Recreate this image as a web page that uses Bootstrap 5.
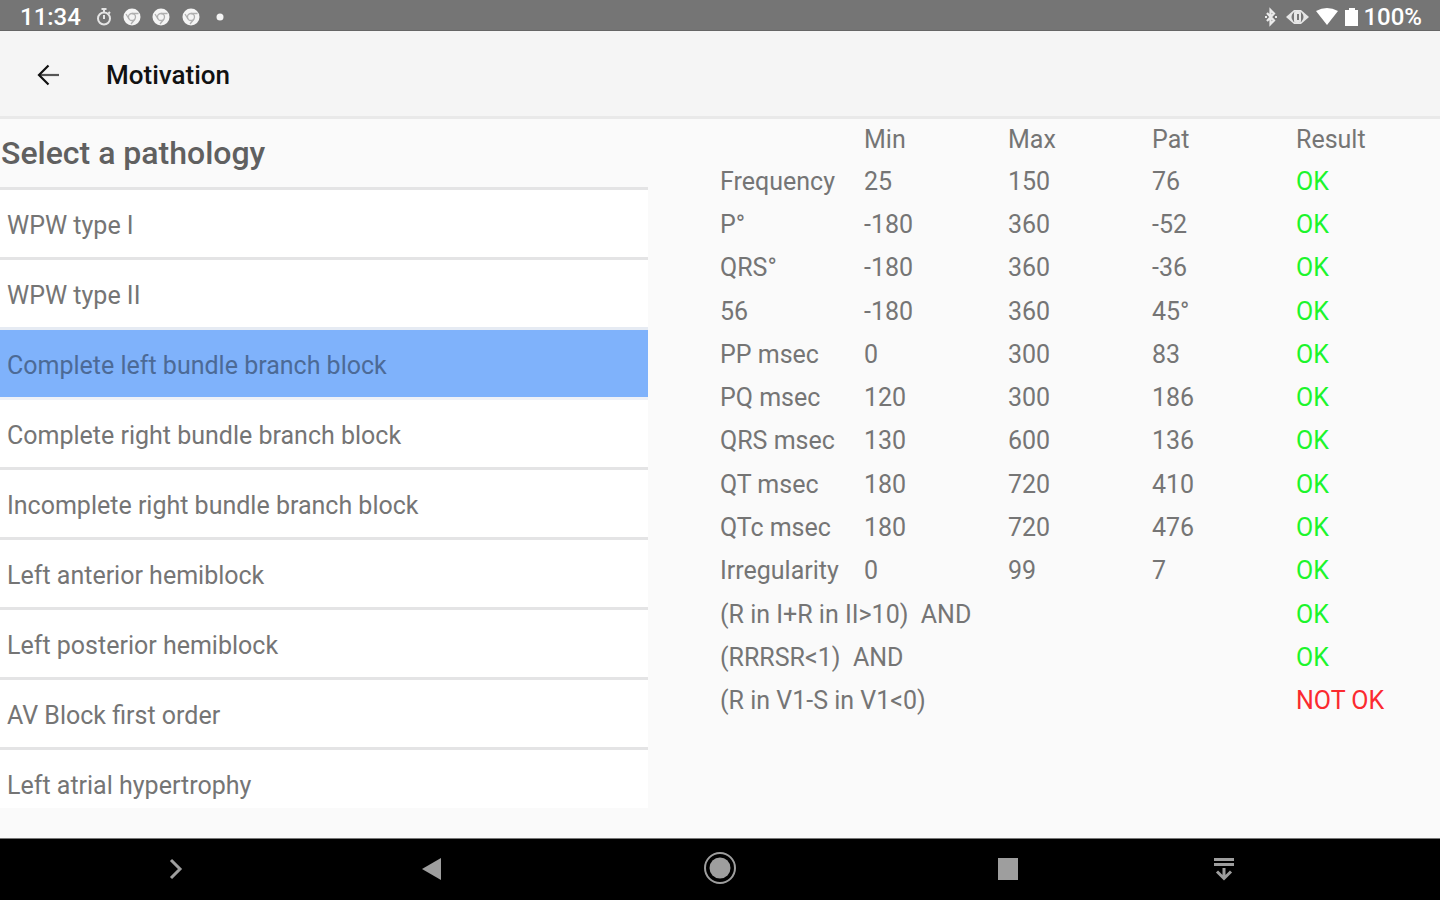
<!DOCTYPE html>
<html lang="en">
<head>
<meta charset="utf-8">
<meta name="viewport" content="width=device-width, initial-scale=1">
<title>Motivation</title>
<link href="https://cdn.jsdelivr.net/npm/bootstrap@5.3.0/dist/css/bootstrap.min.css" rel="stylesheet">
<style>
  body { font-family: Roboto, "Liberation Sans", sans-serif; font-size: 25px; line-height: 32px; color: #757575; background: #fafafa; }
  .status-bar { height: 31px; padding: 3px 18px 0 20px; background: #757575; color: #fff; font-size: 24px; line-height: 30px; font-weight: 500; border-bottom: 1px solid #666; }
  .app-bar { height: 88px; padding: 2px 36px 0; background: #f5f5f5; border-bottom: 3px solid #e9e9e9; color: #111; }
  .app-title { font-size: 26px; line-height: 32px; font-weight: 500; margin-left: 46px; }
  .icon-btn { padding: 0; border: 0; background: none; line-height: 0; color: inherit; }
  .list-pane { width: 45%; padding-bottom: 30px; }
  .list-title { font-size: 32px; line-height: 40px; font-weight: 500; color: #606060; padding: 14px 0 14px 1px; }
  .pathologies .list-group-item { height: 70px; flex-shrink: 0; padding: 4px 7px 0; border: 0; border-top: 3px solid #e4e4e5; color: #757575; background: #fff; background-clip: padding-box; }
  .pathologies .list-group-item + .list-group-item.active { margin-top: 0; border-top-width: 3px; background: #7fb2fb; background-clip: padding-box; color: #4c6a96; border-top-color: #e6ebf3; }
  .pathologies .list-group-item.active + .list-group-item { border-top-color: #eef1f7; }
  .result-pane { width: 50%; }
  .results { table-layout: fixed; height: 604px; }
  .results thead tr { height: 41px; }
  .results th, .results td { padding: 0; font-weight: 400; vertical-align: middle; white-space: pre; }
  .is-ok { color: #1cf52c; }
  .is-bad { color: #fb2a2f; }
  .nav-keys { height: 62px; padding-bottom: 4px; background: #000; color: #9e9e9e; border-top: 1px solid #777; }
  .nav-keys .key { width: 20%; }
  .nav-keys .key-side { width: 15%; margin-left: 5%; }
  .nav-keys .key-end { width: 10%; }
</style>
</head>
<body>
<div class="d-flex flex-column vh-100 overflow-hidden">
  <header class="status-bar d-flex align-items-center flex-shrink-0">
    <span>11:34</span>
    <svg class="ms-3" width="16" height="20" viewBox="0 0 16 20" fill="none" stroke="#e4e4e4" stroke-width="2"><circle cx="7" cy="11.500" r="6"/><path d="M4.500 2h5M7 2v3M11.500 5l1.500 1.500M7 8v4"/></svg>
    <svg class="me-1" width="114" height="20" viewBox="0 0 114 20">
      <g fill="#f4f4f4"><circle cx="19" cy="10" r="8.500"/><circle cx="48" cy="10" r="8.500"/><circle cx="78" cy="10" r="8.500"/><circle cx="107" cy="10" r="3.500"/></g>
      <g fill="none" stroke="#b0b0b0" stroke-width="1.300"><circle cx="19" cy="10" r="3.500"/><path d="M19 6.500h6.500M16 12l-3-5M22 12l-4 5"/><circle cx="48" cy="10" r="3.500"/><path d="M48 6.500h6.500M45 12l-3-5M51 12l-4 5"/><circle cx="78" cy="10" r="3.500"/><path d="M78 6.500h6.500M75 12l-3-5M81 12l-4 5"/></g>
    </svg>
    <svg class="ms-auto me-1" width="96" height="20" viewBox="0 0 96 20" fill="#fff">
      <path d="M4 6l7 7.500L7.500 17V3L11 6.500 4 14M2 10h2m8 0h2" fill="none" stroke="#eaeaea" stroke-width="2.200"/>
      <path d="M23 10l8-7h7l8 7-8 7h-7z" fill="#e6e6e6"/><circle cx="34.500" cy="10" r="6" fill="#777"/><rect x="31" y="4" width="7" height="12" rx="2" fill="#e6e6e6"/><path d="M34 7h2v6h-2z" fill="#777"/>
      <path d="M53 4q11-6 22 0L64 18z"/><path d="M84 3h2V1h6v2h3v16H82V3z"/>
    </svg>
    <span>100%</span>
  </header>

  <nav class="app-bar d-flex align-items-center flex-shrink-0" aria-label="Page">
    <button type="button" class="icon-btn" aria-label="Back">
      <svg width="24" height="24" viewBox="0 0 24 24" fill="none" stroke="currentColor" stroke-width="2.200"><path d="M23 12H4" stroke="#555"/><path d="M12.500 2.500L3 12l9.500 9.500"/></svg>
    </button>
    <h1 class="app-title mb-0">Motivation</h1>
  </nav>

  <main class="d-flex flex-grow-1 justify-content-between overflow-hidden">
    <section class="list-pane d-flex flex-column">
      <h2 class="list-title mb-0">Select a pathology</h2>
      <div class="pathologies list-group list-group-flush overflow-hidden flex-grow-1">
        <button type="button" class="list-group-item list-group-item-action">WPW type I</button>
        <button type="button" class="list-group-item list-group-item-action">WPW type II</button>
        <button type="button" class="list-group-item list-group-item-action active" aria-current="true">Complete left bundle branch block</button>
        <button type="button" class="list-group-item list-group-item-action">Complete right bundle branch block</button>
        <button type="button" class="list-group-item list-group-item-action">Incomplete right bundle branch block</button>
        <button type="button" class="list-group-item list-group-item-action">Left anterior hemiblock</button>
        <button type="button" class="list-group-item list-group-item-action">Left posterior hemiblock</button>
        <button type="button" class="list-group-item list-group-item-action">AV Block first order</button>
        <button type="button" class="list-group-item list-group-item-action">Left atrial hypertrophy</button>
      </div>
    </section>
    <section class="result-pane">
      <table class="results w-100">
        <thead><tr><td></td><th scope="col">Min</th><th scope="col">Max</th><th scope="col">Pat</th><th scope="col">Result</th></tr></thead>
        <tbody>
          <tr><th scope="row">Frequency</th><td>25</td><td>150</td><td>76</td><td class="is-ok">OK</td></tr>
          <tr><th scope="row">P°</th><td>-180</td><td>360</td><td>-52</td><td class="is-ok">OK</td></tr>
          <tr><th scope="row">QRS°</th><td>-180</td><td>360</td><td>-36</td><td class="is-ok">OK</td></tr>
          <tr><th scope="row">56</th><td>-180</td><td>360</td><td>45°</td><td class="is-ok">OK</td></tr>
          <tr><th scope="row">PP msec</th><td>0</td><td>300</td><td>83</td><td class="is-ok">OK</td></tr>
          <tr><th scope="row">PQ msec</th><td>120</td><td>300</td><td>186</td><td class="is-ok">OK</td></tr>
          <tr><th scope="row">QRS msec</th><td>130</td><td>600</td><td>136</td><td class="is-ok">OK</td></tr>
          <tr><th scope="row">QT msec</th><td>180</td><td>720</td><td>410</td><td class="is-ok">OK</td></tr>
          <tr><th scope="row">QTc msec</th><td>180</td><td>720</td><td>476</td><td class="is-ok">OK</td></tr>
          <tr><th scope="row">Irregularity</th><td>0</td><td>99</td><td>7</td><td class="is-ok">OK</td></tr>
          <tr><th scope="row" colspan="4">(R in I+R in II&gt;10)  AND</th><td class="is-ok">OK</td></tr>
          <tr><th scope="row" colspan="4">(RRRSR&lt;1)  AND</th><td class="is-ok">OK</td></tr>
          <tr><th scope="row" colspan="4">(R in V1-S in V1&lt;0)</th><td class="is-bad">NOT OK</td></tr>
        </tbody>
      </table>
    </section>
  </main>

  <footer class="nav-keys d-flex align-items-center flex-shrink-0">
    <div class="key-side text-center pe-2"><button type="button" class="icon-btn" aria-label="Expand"><svg width="24" height="24" viewBox="0 0 24 24" fill="none" stroke="currentColor" stroke-width="3"><path d="M7 3l9 9-9 9"/></svg></button></div>
    <div class="key text-center"><button type="button" class="icon-btn" aria-label="Go back"><svg width="24" height="24" viewBox="0 0 24 24" fill="currentColor"><path d="M2 12L21 1v22z"/></svg></button></div>
    <div class="key text-center"><button type="button" class="icon-btn" aria-label="Home"><svg width="34" height="34" viewBox="0 0 34 34"><circle cx="17" cy="17" r="15" fill="none" stroke="currentColor" stroke-width="2"/><circle cx="17" cy="17" r="10.500" fill="currentColor"/></svg></button></div>
    <div class="key text-center"><button type="button" class="icon-btn" aria-label="Recent apps"><svg width="22" height="24" viewBox="0 0 22 24" fill="currentColor"><path d="M1 1h20v22H1z"/></svg></button></div>
    <div class="key-end text-center"><button type="button" class="icon-btn" aria-label="Hide bar"><svg width="22" height="24" viewBox="0 0 22 24" fill="none" stroke="currentColor" stroke-width="3"><path d="M1 2.500h20M1 7.500h20M11 11v11M4 14.500l7 7 7-7"/></svg></button></div>
  </footer>
</div>
<script src="https://cdn.jsdelivr.net/npm/bootstrap@5.3.0/dist/js/bootstrap.bundle.min.js"></script>
</body>
</html>
